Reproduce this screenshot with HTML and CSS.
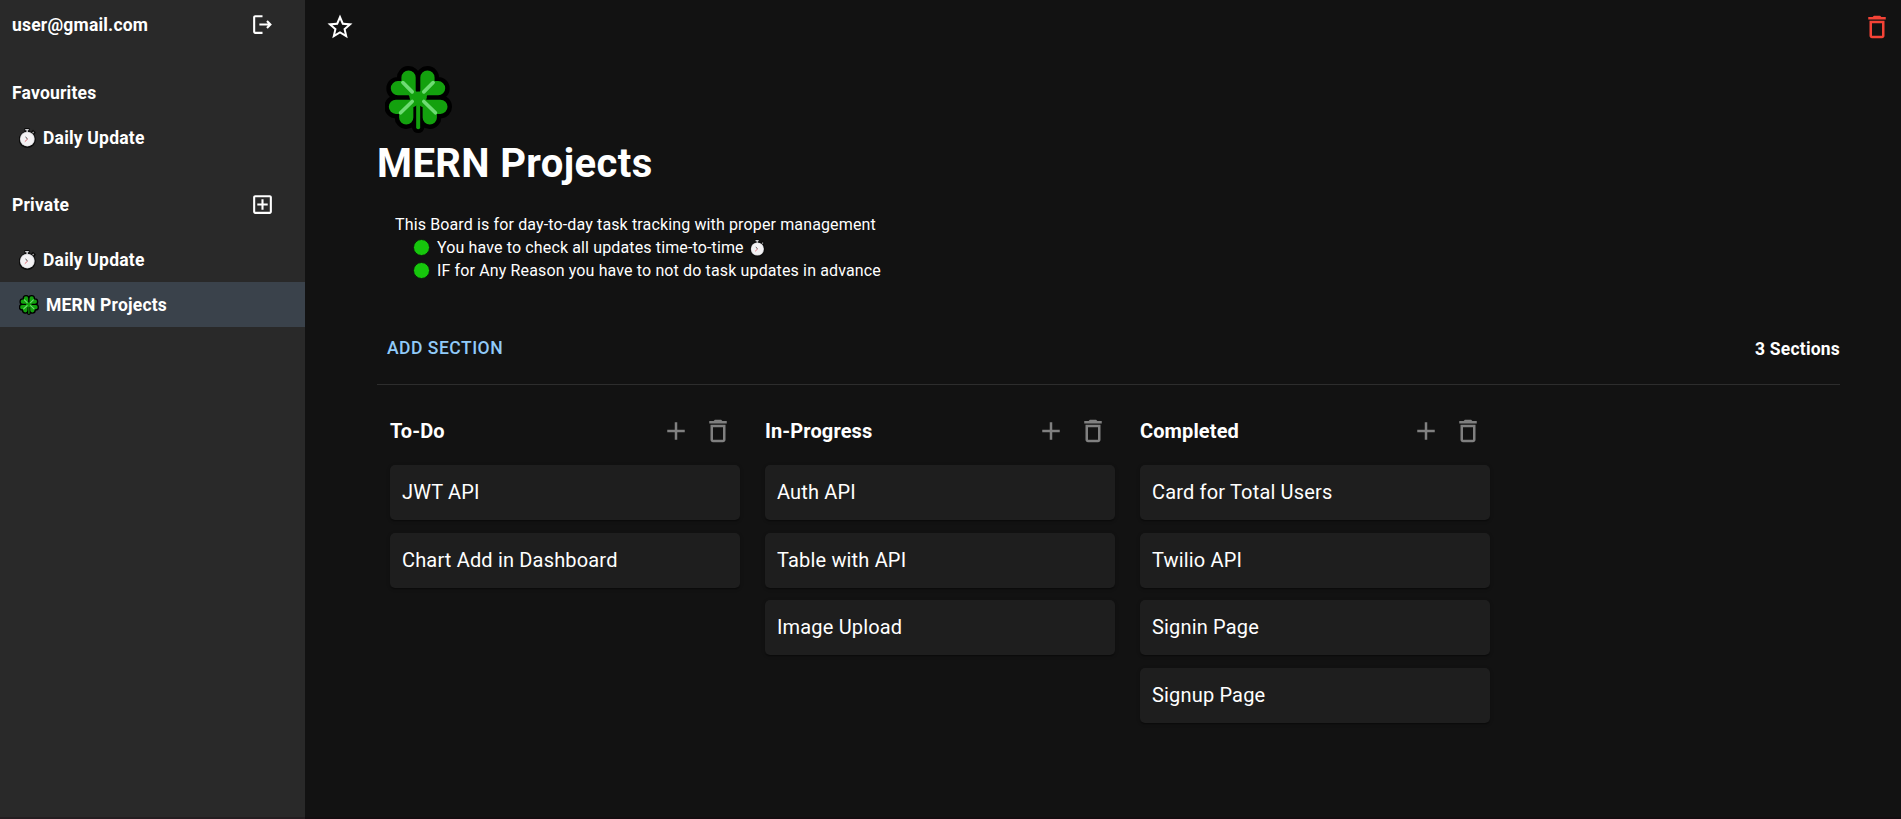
FILE: index.html
```html
<!DOCTYPE html>
<html lang="en">
<head>
<meta charset="utf-8">
<title>MERN Projects</title>
<link rel="stylesheet" href="styles.css">
</head>
<body>
<svg class="defs" width="0" height="0" aria-hidden="true">
  <symbol id="trash" viewBox="0 0 24 24"><path d="M6 19c0 1.1.9 2 2 2h8c1.1 0 2-.9 2-2V7H6v12zM8 9h8v10H8V9zm7.5-5-1-1h-5l-1 1H5v2h14V4h-3.5z"/></symbol>
  <symbol id="plus" viewBox="0 0 24 24"><path d="M19 13h-6v6h-2v-6H5v-2h6V5h2v6h6v2z"/></symbol>
  <symbol id="clover" viewBox="0 0 202 202">
    <g fill="none" stroke-linecap="round" stroke-linejoin="miter">
      <g stroke="#000">
        <path stroke-width="70" d="M71 35 73 70M39 68 75 69M128 35 127 70M160 68 124 69M33 123 68 124M64 155 66 124M167 123 131 124M135 155 134 124"/>
        <path stroke-width="38" d="M100 96V183"/>
      </g>
      <g stroke="#13a10e">
        <path stroke-width="43" d="M71 35V67H39M128 35V67H160M33 123H64V155M167 123H135V155"/>
        <path stroke-width="12" d="M100 96V185"/>
        <path stroke-width="26" d="M84 85 115 111M115 85 84 111"/>
        <ellipse cx="100" cy="95" rx="26" ry="18" fill="#13a10e" stroke="none"/>
      </g>
      <path stroke="#6fdb74" stroke-width="11" d="M54 50 82 78M145 50 117 78M47 141 82 107M152 141 117 107"/>
    </g>
  </symbol>
  <symbol id="watch" viewBox="0 0 18 20">
    <path d="M5.5 0h5v3.2l1.7.5 1.8-1.9 2.9 2.7-1.6 2.2A8.5 8.5 0 1 1 5.5 3.4z" fill="#0b0b0b"/>
    <path d="M6.2.9h3.6v1.4H6.2zM7.4 2h1.5v2H7.4z" fill="#c9c9cc"/>
    <path d="m13.2 4.6 1-1 .9.8-.9 1z" fill="#aaa"/>
    <circle cx="8.3" cy="11.1" r="7.4" fill="#d5d5d8"/>
    <circle cx="8.3" cy="11.1" r="6.6" fill="#f3f2f4"/>
    <path d="M6.5 9 8.6 11" stroke="#333" stroke-width="1" fill="none"/>
    <path d="M8.6 11 5.8 13.7" stroke="#e06a76" stroke-width="1" fill="none"/>
  </symbol>
</svg>
<div class="app">
  <aside class="sidebar">
    <div class="side-row user">
      <span>user@gmail.com</span>
      <svg class="icon-sm" viewBox="0 0 24 24"><path d="m17 8-1.41 1.41L17.17 11H9v2h8.17l-1.58 1.58L17 16l4-4-4-4zM5 5h7V3H5c-1.1 0-2 .9-2 2v14c0 1.1.9 2 2 2h7v-2H5V5z"/></svg>
    </div>
    <div class="side-row favourites"><span>Favourites</span></div>
    <a class="board-link"><svg class="watch"><use href="#watch"/></svg>Daily Update</a>
    <div class="side-row private">
      <span>Private</span>
      <svg class="icon-sm" viewBox="0 0 24 24"><path d="M19 3H5c-1.11 0-2 .9-2 2v14c0 1.1.89 2 2 2h14c1.1 0 2-.9 2-2V5c0-1.1-.9-2-2-2zm0 16H5V5h14v14zm-8-2h2v-4h4v-2h-4V7h-2v4H7v2h4z"/></svg>
    </div>
    <a class="board-link"><svg class="watch"><use href="#watch"/></svg>Daily Update</a>
    <a class="board-link selected"><svg class="clover-sm"><use href="#clover"/></svg>MERN Projects</a>
  </aside>
  <main class="main">
    <header class="topbar">
      <svg class="icon" viewBox="0 0 24 24"><path d="m22 9.24-7.19-.62L12 2 9.19 8.63 2 9.24l5.46 4.73L5.82 21 12 17.27 18.18 21l-1.63-7.03L22 9.24zM12 15.4l-3.76 2.27 1-4.28-3.32-2.88 4.38-.38L12 6.1l1.71 4.04 4.38.38-3.32 2.88 1 4.28L12 15.4z"/></svg>
      <svg class="icon danger"><use href="#trash"/></svg>
    </header>
    <div class="board">
      <svg class="clover"><use href="#clover"/></svg>
      <h1 class="title">MERN Projects</h1>
      <div class="description">
        <p>This Board is for day-to-day task tracking with proper management</p>
        <p class="bullet"><span class="dot"></span>You have to check all updates time-to-time<svg class="watch-inline"><use href="#watch"/></svg></p>
        <p class="bullet"><span class="dot"></span>IF for Any Reason you have to not do task updates in advance</p>
      </div>
      <div class="toolbar">
        <button class="add">ADD SECTION</button>
        <span class="count">3 Sections</span>
      </div>
      <div class="sections">
        <section class="section">
          <div class="section-head"><h2>To-Do</h2><svg class="icon"><use href="#plus"/></svg><svg class="icon"><use href="#trash"/></svg></div>
          <div class="card">JWT API</div>
          <div class="card">Chart Add in Dashboard</div>
        </section>
        <section class="section">
          <div class="section-head"><h2>In-Progress</h2><svg class="icon"><use href="#plus"/></svg><svg class="icon"><use href="#trash"/></svg></div>
          <div class="card">Auth API</div>
          <div class="card">Table with API</div>
          <div class="card">Image Upload</div>
        </section>
        <section class="section">
          <div class="section-head"><h2>Completed</h2><svg class="icon"><use href="#plus"/></svg><svg class="icon"><use href="#trash"/></svg></div>
          <div class="card">Card for Total Users</div>
          <div class="card">Twilio API</div>
          <div class="card">Signin Page</div>
          <div class="card">Signup Page</div>
        </section>
      </div>
    </div>
  </main>
</div>
</body>
</html>
```
FILE: styles.css
```css
* { box-sizing: border-box; margin: 0; padding: 0; }
body {
  background: #121212;
  color: #fff;
  font-family: Roboto, "Liberation Sans", sans-serif;
  overflow: hidden;
}
.defs { position: absolute; }
svg { display: block; flex: none; fill: currentColor; }
.app { display: flex; height: 819px; }
.app::after {
  content: "";
  position: absolute;
  left: 0;
  right: 0;
  top: 817px;
  height: 2px;
  background: rgba(24, 0, 12, .25);
}

.sidebar {
  width: 305px;
  flex: none;
  background: #292929;
  font-size: 17.5px;
  font-weight: 700;
  letter-spacing: .2px;
}
.side-row {
  display: flex;
  align-items: center;
  justify-content: space-between;
  padding: 0 30px 0 12px;
}
.user { height: 49px; }
.favourites { height: 45px; margin-top: 21px; }
.private { height: 45px; margin-top: 22px; margin-bottom: 10px; }
.icon-sm { width: 25px; height: 25px; }
.board-link {
  display: flex;
  align-items: center;
  height: 45px;
  padding-left: 19px;
}
.selected { background: #3a424b; }
.watch { width: 18px; height: 20px; margin-right: 6px; }
.clover-sm { width: 20px; height: 20px; margin-right: 7px; }

.main { flex: 1; min-width: 0; }
.topbar {
  display: flex;
  justify-content: space-between;
  align-items: center;
  height: 54px;
  padding: 0 9px 0 20px;
}
.icon { width: 30px; height: 30px; }
.danger { color: #f44336; }

.board { padding: 12px 61px 0 72px; }
.clover { width: 67px; height: 67px; margin-left: 8px; }
.title {
  margin-top: 8px;
  font-size: 40px;
  font-weight: 700;
  line-height: 46px;
  letter-spacing: .38px;
}
.description {
  padding: 26px 18px 0;
  font-size: 16px;
  line-height: 23px;
  letter-spacing: .135px;
}
.bullet { display: flex; align-items: center; padding-left: 18px; }
.dot {
  width: 17px;
  height: 17px;
  margin-right: 7px;
  border: 1px solid #0b1a0a;
  border-radius: 50%;
  background: #16c60c;
}
.watch-inline { width: 16px; height: 18px; margin-left: 6px; }
.toolbar {
  display: flex;
  align-items: center;
  justify-content: space-between;
  height: 74px;
  margin-top: 29px;
  border-bottom: 1px solid #2d2d2d;
}
.add {
  border: 0;
  background: none;
  padding: 0 10px;
  color: #90caf9;
  font: 500 17.5px/30px Roboto, "Liberation Sans", sans-serif;
  letter-spacing: .5px;
}
.count {
  padding-top: 2px;
  font-size: 17.5px;
  font-weight: 700;
  letter-spacing: .2px;
}
.sections { display: flex; gap: 25px; padding: 25px 0 0 13px; }
.section { width: 350px; }
.section-head {
  display: flex;
  align-items: center;
  gap: 12px;
  height: 42px;
  margin-bottom: 13px;
  padding-right: 7px;
  color: #808080;
}
.section-head h2 {
  flex: 1;
  color: #fff;
  font-size: 20px;
  font-weight: 700;
  letter-spacing: .12px;
}
.card {
  height: 55px;
  margin-bottom: 12.5px;
  padding: 0 12px;
  border-radius: 5px;
  background: #1e1e1e;
  box-shadow: 0 2px 1px -1px rgba(0,0,0,.2), 0 1px 1px rgba(0,0,0,.14), 0 1px 4px rgba(0,0,0,.12);
  font-size: 20px;
  line-height: 55px;
  letter-spacing: .17px;
}
```
